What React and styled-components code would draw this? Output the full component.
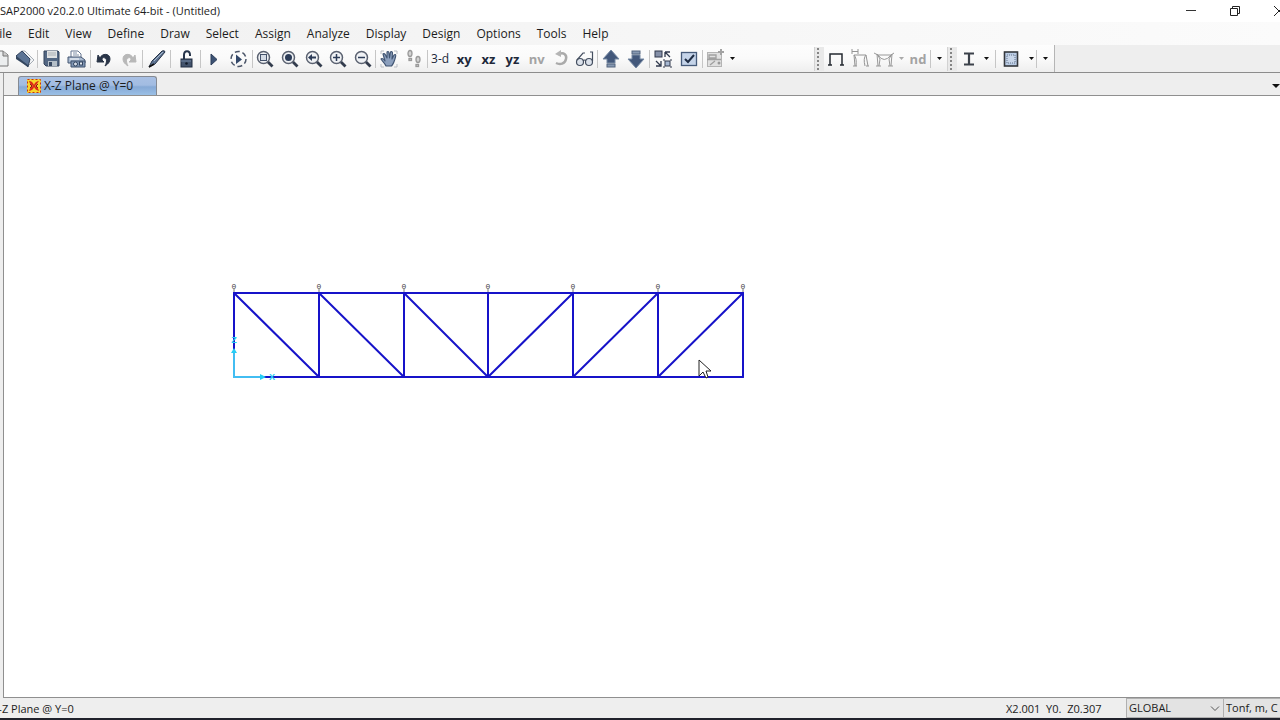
import React from "react";
import styled, { createGlobalStyle, css } from "styled-components";

const Global = createGlobalStyle`
  * { box-sizing: border-box; }
  html, body { margin: 0; height: 100%; overflow: hidden; }
  #root { height: 100%; }
  body, button, select { font-family: "Open Sans", "Noto Sans", sans-serif; font-size: 11px; color: #1c1c1c; }
  button { border: 0; padding: 0; margin: 0; background: none; }
  svg { display: block; flex: none; overflow: visible; }
`;

const Window = styled.div`
  display: flex;
  flex-direction: column;
  height: 100vh;
  overflow: hidden;
  background: #eeeeee;
  border-bottom: 2px solid #20222c;
`;

const TitleBar = styled.header`
  display: flex;
  align-items: center;
  height: 22px;
  flex: none;
  background: #fff;
  white-space: nowrap;
`;

const Title = styled.h1`
  margin: 0;
  flex: 1;
  font-size: 11px;
  line-height: 22px;
  font-weight: 400;
`;

const CaptionButton = styled.button`
  display: flex;
  align-items: center;
  justify-content: center;
  width: 44px;
  height: 20px;
  flex: none;
`;

const CaptionButtons = styled.div`
  display: flex;
  margin-right: -21px;
`;

const MenuBar = styled.nav`
  display: flex;
  gap: 16px;
  height: 23px;
  flex: none;
  margin-left: -7px;
  background: linear-gradient(90deg, #f0f0f0, #f6f6f6 50%, #fbfbfb);
`;

const MenuItem = styled.button`
  font-size: 12px;
  line-height: 24px;
  white-space: nowrap;
`;

const ToolArea = styled.div`
  display: flex;
  height: 28px;
  flex: none;
  border-bottom: 1px solid #8c8c8c;
`;

const Toolbar = styled.div`
  display: flex;
  align-items: center;
  height: 27px;
  flex: none;
  width: ${(p) => p.$width}px;
  background: linear-gradient(#fdfdfd, #fafafa 50%, #eeeeee);
  ${(p) => p.$end && css`border-right: 1px solid #b5b5b5;`}
`;

const Group = styled.div`
  display: flex;
  align-items: center;
  justify-content: ${(p) => (p.$clipped ? "flex-end" : "flex-start")};
  width: ${(p) => p.$width}px;
  height: 18px;
  flex: none;
  border-right: 1px solid ${(p) => (p.$open ? "transparent" : "#c6c6c6")};
`;

const ToolButton = styled.button`
  display: flex;
  align-items: center;
  justify-content: center;
  flex: ${(p) => (p.$fixed ? "0 0 24px" : "1 1 0")};
  min-width: 0;
  height: 22px;
  font-size: ${(p) => (p.$light ? 12 : 13)}px;
  line-height: 20px;
  font-weight: ${(p) => (p.$light ? 400 : 700)};
  color: ${(p) => (p.disabled ? "#a3a3a3" : "#20283a")};
`;

const DropButton = styled.button`
  display: flex;
  align-items: center;
  justify-content: center;
  width: ${(p) => (p.$narrow ? 10 : 17)}px;
  height: 20px;
  flex: none;
`;

const Grip = styled.div`
  width: 10px;
  height: 24px;
  flex: none;
  border-left: 1px solid #d2d2d2;
  background: radial-gradient(circle at 3px 2px, #858585 1px, transparent 1px) 0 0 / 10px 4px, #e9e9e9;
`;

const TabStrip = styled.div`
  display: flex;
  align-items: flex-end;
  justify-content: space-between;
  height: 22px;
  flex: none;
  margin-left: 3px;
  padding-left: 14px;
  border-left: 1px solid #9a9a9a;
`;

const Tab = styled.button`
  display: flex;
  align-items: center;
  gap: 3px;
  width: 139px;
  height: 19px;
  padding-left: 8px;
  border: 1px solid #858a92;
  border-bottom: 0;
  border-radius: 3px 3px 0 0;
  background: linear-gradient(#a9c0e4, #a2bce2 45%, #86a9d6 55%, #9bc0e6);
  font-size: 12px;
  line-height: 18px;
  white-space: nowrap;
`;

const TabMenuButton = styled.button`
  display: flex;
  align-items: center;
  width: 8px;
  height: 19px;
`;

const Canvas = styled.main`
  flex: 1;
  min-height: 0;
  margin-left: 3px;
  padding: 180px 0 0 216px;
  overflow: hidden;
  background: #fff;
  border: 1px solid #8f8f8f;
  border-right: 0;
`;

const StatusBar = styled.footer`
  display: flex;
  align-items: stretch;
  height: 20px;
  flex: none;
  font-size: 11px;
  line-height: 22px;
  white-space: nowrap;
`;

const StatusText = styled.div`
  flex: 1;
  margin-left: -8px;
`;

const Coordinates = styled.div`
  width: 120px;
`;

const StatusSelect = styled.label`
  display: flex;
  align-items: center;
  position: relative;
  width: ${(p) => p.$width}px;
  flex: none;
  overflow: hidden;
  background: #e3e3e3;
  border: 1px solid #b0b0b0;
  border-right-width: 0;
  select {
    appearance: none;
    width: 100%;
    height: 18px;
    padding: 0 0 0 2px;
    border: 0;
    border-radius: 0;
    background: transparent;
    line-height: 18px;
  }
  svg { position: absolute; right: 4px; }
`;

const Caret = ({ big, color = "#111" }) => (
  <svg width={big ? 8 : 5} height={big ? 4 : 3} viewBox="0 0 8 4" preserveAspectRatio="none"><path d="M0 0h8L4 4z" fill={color} /></svg>
);

const Icon = ({ children, size = 20 }) => (
  <svg width={size} height={size} viewBox="0 0 20 20" fill="none">{children}</svg>
);

const steel = "#8b9fbd";
const gray = "#999";

const NewIcon = () => <Icon><path d="M4 2h8l5 4v11H4z" fill="#eceeef" stroke="#777" /><path d="M12 2v5h5" fill="#ccc" stroke="#777" /></Icon>;
const OpenIcon = () => (
  <Icon>
    <path d="M7 2h3l9 9-6 6z" fill="#f1f3f5" stroke="#a6adb5" />
    <path d="M1 7l6-5 8 8-2 8z" fill="#5c7495" stroke="#33445e" />
    <path d="M1 7v3l12 8v-2z" fill="#34465f" />
  </Icon>
);
const SaveIcon = () => (
  <Icon>
    <path d="M3 2h14l1 1v14H5l-2-2z" fill="#536783" stroke="#34445c" />
    <rect x="6" y="2" width="10" height="7" fill="#e0e2e3" /><path d="M7 4h8M7 6h8" stroke="#aab0b5" />
    <rect x="7" y="12" width="9" height="5" fill="#b5bfc8" /><rect x="8" y="13" width="3" height="4" fill="#384962" />
  </Icon>
);
const PrintIcon = () => (
  <Icon>
    <path d="M4 8V2h7l3 3v4" fill="#fff" stroke="#667791" /><path d="M6 4h4M6 6h6" stroke="#8090a7" />
    <path d="M1 8h13l4 3v3H1z" fill="#aabbd1" stroke="#435571" />
    <path d="M4 12h14v6H4z" fill="#7f95b3" stroke="#3e506d" />
    <path d="M3 10h9" stroke="#fff" /><circle cx="8.500" cy="15" r="2" fill="#d5dde8" stroke="#33445e" /><rect x="12.500" y="13" width="3" height="3" fill="#e8edf3" stroke="#33445e" />
  </Icon>
);
const UndoShape = ({ color }) => (
  <g><path d="M6 9c2-5 10-5 10 1 0 3-2 5-5 7 2-4 2-7 0-8-2-1-3 0-3 2l2 2H3l1-7z" fill={color} stroke={color} strokeLinejoin="round" /></g>
);
const UndoIcon = () => <Icon><UndoShape color="#293447" /></Icon>;
const RedoIcon = () => <Icon><g transform="translate(20 0) scale(-1 1)"><UndoShape color="#b8b8b8" /></g></Icon>;
const PenIcon = () => (
  <Icon><path d="M2 18l3-6L15 2q3-1 3 1L8 15z" fill="#5d7392" stroke="#263347" /><path d="M7 12l9-9" stroke="#a9b9cc" /><path d="M2 18l5-3" stroke="#111" strokeWidth="1.500" /></Icon>
);
const LockIcon = () => (
  <Icon><path d="M8 10V6c0-5 6-5 6 0v1" stroke="#26344a" strokeWidth="2" /><rect x="5" y="10" width="11" height="8" fill="#43536c" stroke="#202c40" /><path d="M5 12h10" stroke="#7085a2" /><circle cx="10.500" cy="14.500" r="1.300" fill="#111a28" /></Icon>
);
const RunIcon = () => <Icon><path d="M7 5l6 5.500L7 16z" fill="#3c5274" stroke="#2d3e5a" /></Icon>;
const RunLoopIcon = () => (
  <Icon><circle cx="9.500" cy="10" r="7.500" stroke="#4c5669" strokeWidth="1.500" strokeDasharray="5 2.850" /><path d="M7 5.500l6 5L7 15z" fill="#33486a" /></Icon>
);
const Lens = ({ children }) => (
  <Icon><circle cx="8.500" cy="8.500" r="6" fill="#f0f2f5" stroke="#5a6170" strokeWidth="1.500" /><path d="M13 13l4.500 4.500" stroke="#333c4d" strokeWidth="2.800" />{children}</Icon>
);
const ZoomWindowIcon = () => <Lens><rect x="5.500" y="5.500" width="6" height="6" fill="#d4dbe5" stroke="#43516a" /></Lens>;
const ZoomFullIcon = () => <Lens><circle cx="8.500" cy="8.500" r="3.500" fill="#2c3c58" /></Lens>;
const ZoomBackIcon = () => <Lens><path d="M4 8.500l4-3.500v2.500h4v2H8V12z" fill="#2c3c58" /></Lens>;
const ZoomInIcon = () => <Lens><path d="M8.500 5v7M5 8.500h7" stroke="#2c3c58" strokeWidth="1.500" /></Lens>;
const ZoomOutIcon = () => <Lens><path d="M5 8.500h7" stroke="#2c3c58" strokeWidth="1.500" /></Lens>;
const HandIcon = () => (
  <Icon>
    <path d="M2 5V2h3M15 2h3v3M18 15v3h-3M5 18H2v-3" stroke="#b8bcc2" />
    <path d="M7 17c-1-3-4-5-5-7 1-1 3 0 4 2L4 5c1-1 2 0 2.500 1L8 9V3c1-1 2 0 2 1l.5 5 1-6c1-1 2 0 2 1l-.5 6 2-4c2-1 2 0 1.500 2-1 4-2 7-4 9z" fill={steel} stroke="#3f5371" strokeWidth="1.100" strokeLinejoin="round" />
  </Icon>
);
const WalkIcon = () => (
  <Icon><g stroke={gray} strokeWidth="1.300" fill="#d2d2d2"><ellipse cx="6" cy="4.500" rx="2" ry="3" /><rect x="5" y="9.500" width="2.500" height="2" /><ellipse cx="14" cy="10.500" rx="2" ry="3" /><rect x="12" y="15.500" width="2.500" height="2" /></g></Icon>
);
const RotateIcon = () => <Icon><path d="M8 5c5-2 8 1 7 5-1 5-6 6-10 4" stroke="#aaa" strokeWidth="2.500" /><path d="M4 5l6-4v7z" fill="#b5b5b5" /></Icon>;
const GlassesIcon = () => (
  <Icon><circle cx="5" cy="13" r="3.500" fill="#dce2eb" stroke="#454f60" strokeWidth="1.200" /><circle cx="14" cy="13" r="3.500" fill="#dce2eb" stroke="#454f60" strokeWidth="1.200" /><path d="M8 12q1.500-2 3 0M2 11L8 4h2M17.500 12V3H15" stroke="#454f60" strokeWidth="1.200" /></Icon>
);
const Arrow = () => <g><path d="M10 1l8 9h-4v4H6v-4H2z" fill="#43587b" stroke="#778aa4" /><rect x="6" y="15" width="8" height="3" fill="#8799b2" stroke="#53657f" /></g>;
const UpIcon = () => <Icon><Arrow /></Icon>;
const DownIcon = () => <Icon><g transform="translate(0 20) scale(1 -1)"><Arrow /></g></Icon>;
const SwapIcon = () => (
  <Icon>
    <rect x="2" y="2" width="7" height="6" fill="#8590a8" stroke="#30394d" /><path d="M12 3h5M12 3v5M12 3l5 5" stroke="#30394d" strokeWidth="1.300" />
    <path d="M3 12l5 5M8 12v5H3" stroke="#30394d" strokeWidth="1.300" /><rect x="12" y="12" width="5" height="5" fill="#a7b8d2" stroke="#30394d" /><path d="M10 11h2M17 11h2M10 18h2M17 18h2" stroke="#30394d" />
  </Icon>
);
const CheckIcon = () => <Icon><rect x="2.500" y="3.500" width="15" height="13" fill="#c5d4e9" stroke="#465b7a" strokeWidth="1.300" /><path d="M6 10l3 3 6-7" stroke="#1f2d44" strokeWidth="2" /></Icon>;
const FormIcon = () => (
  <Icon><rect x="2.500" y="3.500" width="14" height="14" fill="#e0e0e0" stroke="#b4b4b4" /><path d="M4 6h7v3H4zM2 10.500h14M5 16l5-4" stroke="#a0a0a0" strokeWidth="1.300" /><path d="M16 0v6M13 3h6" stroke="#a3a3a3" strokeWidth="2" /><circle cx="14" cy="14" r="1.500" fill="#999" /></Icon>
);
const FrameIcon = () => <Icon><path d="M4 16V5h12v11M2 16h4M14 16h4" stroke="#252a31" strokeWidth="1.500" /></Icon>;
const FrameDimIcon = () => <Icon><path d="M5 17L4 6h12l2 11M3 17h4M16 17h3M4 6q3 3 2 11M16 6q-3 3-1 11M2 0v5M8 0v5M2 2.500h6" stroke="#949494" /></Icon>;
const FrameMomentIcon = () => <Icon><path d="M4 17L3 5M17 17l1-12M2 17h5M14 17h5M0 4l4 2h13l3-2M4 6q6 9 13 0M3 5l3 5-1 7M18 5l-3 5 1 7" stroke="#999" /></Icon>;
const SectionIcon = () => <Icon><path d="M5 4.500h10M5 15.500h10M10 4v12" stroke="#3c424b" strokeWidth="2.200" /></Icon>;
const AreaIcon = () => <Icon><rect x="3.500" y="3" width="13" height="14" fill="#b9cbe4" stroke="#34373c" strokeWidth="1.600" /><path d="M6 6h8v8H6z" fill="#c8d6ea" stroke="#65748a" strokeDasharray="1 1" /></Icon>;
const ModelIcon = () => (
  <svg width="14" height="14" viewBox="0 0 14 14"><rect width="14" height="14" fill="#f7d62c" /><path d="M0.500 0.500h13v13H0.500z" fill="none" stroke="#c62e1c" strokeDasharray="2 2" /><path d="M2 2c3 0 4 2 5 4 1-3 3-4 5-4-2 2-2 4-4 5 2 1 3 2 4 5-3-1-4-2-5-4-1 3-2 3-5 4 1-3 2-4 4-5-2-1-3-2-4-5z" fill="#dc2a18" /><path d="M3 5l2 2-2 2M11 5L9 7l2 2" fill="none" stroke="#8b1a12" /></svg>
);

const menus = ["File", "Edit", "View", "Define", "Draw", "Select", "Assign", "Analyze", "Display", "Design", "Options", "Tools", "Help"];

const groups = [
  { width: 38, clipped: true, tools: [["New model", NewIcon], ["Open", OpenIcon]] },
  { width: 53, tools: [["Save", SaveIcon], ["Print", PrintIcon]] },
  { width: 52, tools: [["Undo", UndoIcon], ["Redo", RedoIcon, true]] },
  { width: 28, tools: [["Edit", PenIcon]] },
  { width: 30, tools: [["Unlock model", LockIcon]] },
  { width: 52, tools: [["Run analysis", RunIcon], ["Model alive", RunLoopIcon]] },
  { width: 123, tools: [["Zoom window", ZoomWindowIcon], ["Full view", ZoomFullIcon], ["Previous zoom", ZoomBackIcon], ["Zoom in", ZoomInIcon], ["Zoom out", ZoomOutIcon]] },
  { width: 52, tools: [["Pan", HandIcon], ["Walk", WalkIcon, true]] },
  { width: 170, tools: [["3-d"], ["xy"], ["xz"], ["yz"], ["nv", null, true], ["Rotate", RotateIcon, true], ["Perspective", GlassesIcon]] },
  { width: 52, tools: [["Move up", UpIcon], ["Move down", DownIcon]] },
  { width: 53, tools: [["Shrink objects", SwapIcon], ["Display options", CheckIcon]] },
];

const Tool = ({ name, icon: I, disabled, fixed }) => (
  <ToolButton aria-label={name} disabled={disabled} $light={name === "3-d"} $fixed={fixed}>
    {I ? <I /> : name}
  </ToolButton>
);

const xs = [14, 99, 184, 268, 353, 438, 523];

function Truss() {
  return (
    <svg width="540" height="110" viewBox="0 0 540 110" role="img" aria-label="Truss elevation">
      <g stroke="#1713c9" strokeWidth="2" fill="none" strokeLinecap="round">
        <path d="M14 17H523M14 101H523" />
        {xs.map((x) => <path key={x} d={`M${x} 17V101`} />)}
        {xs.slice(0, 3).map((x, i) => <path key={x} d={`M${x} 17L${xs[i + 1]} 101`} />)}
        {xs.slice(4).map((x, i) => <path key={x} d={`M${xs[i + 3]} 101L${x} 17`} />)}
      </g>
      {xs.map((x) => (
        <g key={x}>
          <text x={x} y="13" textAnchor="middle" fontFamily="Liberation Mono, monospace" fontSize="8" fill="#444">0</text>
          <path d={`M${x} 13v3`} stroke="#777" />
        </g>
      ))}
      <path d="M14 76V101H42" fill="none" stroke="#42bdf2" strokeWidth="2" />
      <path d="M11 77l3-5 3 5zM40 98l6 3-6 3z" fill="#26cdf5" />
      <g fontFamily="Liberation Sans, sans-serif" fontSize="9" fontWeight="700" fill="#26cdf5" textAnchor="middle">
        <text x="14" y="67">Z</text>
        <text x="52" y="104">X</text>
      </g>
      <path d="M479 84V100l4-4 3 6 2-1-2-6h5z" fill="#fff" stroke="#222" />
    </svg>
  );
}

export default function App() {
  return (
    <>
      <Global />
      <Window>
        <TitleBar>
          <Title>SAP2000 v20.2.0 Ultimate 64-bit - (Untitled)</Title>
          <CaptionButtons>
            <CaptionButton aria-label="Minimize"><svg width="10" height="10"><path d="M0 4.500h10" stroke="#333" /></svg></CaptionButton>
            <CaptionButton aria-label="Restore"><svg width="10" height="10" fill="none" stroke="#222"><path d="M0.500 2.500h7v7h-7zM2.500 2V0.500h7v7H8" /></svg></CaptionButton>
            <CaptionButton aria-label="Close"><svg width="10" height="10"><path d="M0 0l10 10M10 0L0 10" stroke="#222" /></svg></CaptionButton>
          </CaptionButtons>
        </TitleBar>
        <MenuBar>{menus.map((m) => <MenuItem key={m}>{m}</MenuItem>)}</MenuBar>
        <ToolArea>
          <Toolbar $width={814}>
            {groups.map((g, i) => (
              <Group key={i} $width={g.width} $clipped={g.clipped}>
                {g.tools.map(([name, icon, off]) => <Tool key={name} name={name} icon={icon} disabled={off} fixed={g.clipped} />)}
              </Group>
            ))}
            <Group $width={40} $open>
              <Tool name="Named displays" icon={FormIcon} disabled fixed />
              <DropButton $narrow aria-label="More displays"><Caret /></DropButton>
            </Group>
          </Toolbar>
          <Toolbar $width={133}>
            <Grip />
            <Group $width={107}>
              <Tool name="Show undeformed shape" icon={FrameIcon} fixed />
              <Tool name="Show deformed shape" icon={FrameDimIcon} disabled fixed />
              <Tool name="Show forces" icon={FrameMomentIcon} disabled fixed />
              <DropButton $narrow disabled aria-label="Force options"><Caret color="#aaa" /></DropButton>
              <Tool name="nd" disabled />
            </Group>
            <DropButton aria-label="Toolbar options"><Caret /></DropButton>
          </Toolbar>
          <Toolbar $width={108} $end>
            <Grip />
            <Group $width={39}>
              <Tool name="Frame section" icon={SectionIcon} fixed />
              <DropButton $narrow aria-label="Frame sections"><Caret /></DropButton>
            </Group>
            <Group $width={41}>
              <Tool name="Area section" icon={AreaIcon} />
              <DropButton $narrow aria-label="Area sections"><Caret /></DropButton>
            </Group>
            <DropButton aria-label="More tools"><Caret /></DropButton>
          </Toolbar>
        </ToolArea>
        <TabStrip>
          <Tab><ModelIcon />X-Z Plane @ Y=0</Tab>
          <TabMenuButton aria-label="Window list"><Caret big /></TabMenuButton>
        </TabStrip>
        <Canvas><Truss /></Canvas>
        <StatusBar>
          <StatusText>X-Z Plane @ Y=0</StatusText>
          <Coordinates>X2.001&nbsp; Y0.&nbsp; Z0.307</Coordinates>
          <StatusSelect $width={97}>
            <select aria-label="Coordinate system"><option>GLOBAL</option></select>
            <svg width="8" height="5" fill="none" stroke="#555"><path d="M0 0.500l4 4 4-4" /></svg>
          </StatusSelect>
          <StatusSelect $width={57}>
            <select aria-label="Units"><option>Tonf, m, C</option></select>
          </StatusSelect>
        </StatusBar>
      </Window>
    </>
  );
}
